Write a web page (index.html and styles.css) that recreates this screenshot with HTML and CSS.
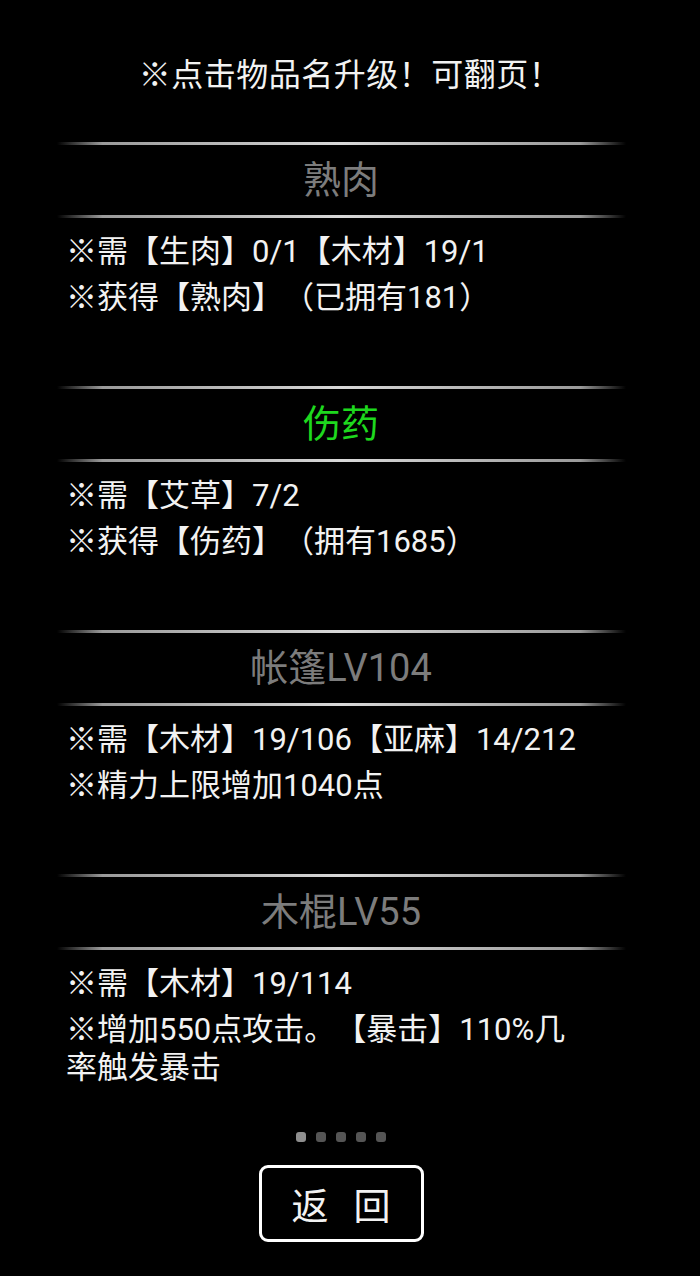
FILE: index.html
```html
<!DOCTYPE html>
<html lang="zh">
<head>
    <meta charset="UTF-8">
    <meta name="viewport" content="width=device-width, initial-scale=1.0">
    <title>升级</title>
    <link rel="stylesheet" href="styles.css">
</head>
<body>
    <div class="page">
        <div class="tip">※点击物品名升级！可翻页！</div>

        <div class="item">
            <div class="item-line"></div>
            <div class="item-name">熟肉</div>
            <div class="item-line"></div>
            <p>※需【生肉】0/1【木材】19/1</p>
            <p>※获得【熟肉】（已拥有181）</p>
        </div>

        <div class="item">
            <div class="item-line"></div>
            <div class="item-name active">伤药</div>
            <div class="item-line"></div>
            <p>※需【艾草】7/2</p>
            <p>※获得【伤药】（拥有1685）</p>
        </div>

        <div class="item">
            <div class="item-line"></div>
            <div class="item-name">帐篷LV104</div>
            <div class="item-line"></div>
            <p>※需【木材】19/106【亚麻】14/212</p>
            <p>※精力上限增加1040点</p>
        </div>

        <div class="item">
            <div class="item-line"></div>
            <div class="item-name">木棍LV55</div>
            <div class="item-line"></div>
            <p>※需【木材】19/114</p>
            <p>※增加550点攻击。【暴击】110%几率触发暴击</p>
        </div>

        <div class="pager">
            <span class="dot current"></span>
            <span class="dot"></span>
            <span class="dot"></span>
            <span class="dot"></span>
            <span class="dot"></span>
        </div>

        <div class="footer">
            <a href="#" class="back-button">返 回</a>
        </div>
    </div>
</body>
</html>
```

FILE: styles.css
```css
body {
    margin: 0;
    padding: 0;
    background-color: #000;
    color: #f2f2f2;
    font-family: Roboto, 'Noto Sans CJK SC', sans-serif;
    text-spacing-trim: space-all;
}

.page {
    width: 700px;
    height: 1276px;
    overflow: hidden;
}

.tip {
    box-sizing: border-box;
    height: 142px;
    padding-top: 52px;
    line-height: 46px;
    font-size: 32px;
    letter-spacing: 0.5px;
    text-align: center;
}

.item {
    height: 244px;
    box-sizing: border-box;
}

.item-line {
    height: 3px;
    margin: 0 74px 0 57px;
    background: linear-gradient(to right, rgba(255, 255, 255, 0), #9a9a9a 8%, #d8d8d8 50%, #9a9a9a 92%, rgba(255, 255, 255, 0));
}

.item-name {
    height: 70px;
    line-height: 70px;
    font-size: 38px;
    text-align: center;
    color: #7c7c7c;
    padding-right: 18px;
}

.item-name.active {
    color: #1ed81e;
}

.item p {
    margin: 0 110px 8px 66px;
    font-size: 31px;
    line-height: 38px;
}

.item-line + p {
    margin-top: 15px;
}

.pager {
    display: flex;
    justify-content: center;
    gap: 10px;
    padding-top: 14px;
    padding-right: 18px;
}

.dot {
    width: 10px;
    height: 10px;
    border-radius: 3px;
    background: #555;
}

.dot.current {
    background: #8e8e8e;
}

.footer {
    display: flex;
    justify-content: center;
    padding-top: 23px;
    padding-right: 18px;
}

.back-button {
    box-sizing: border-box;
    width: 165px;
    height: 77px;
    border: 3px solid #fff;
    border-radius: 9px;
    display: flex;
    justify-content: center;
    align-items: center;
    color: #f2f2f2;
    font-size: 37px;
    word-spacing: 16px;
    text-decoration: none;
}
```
